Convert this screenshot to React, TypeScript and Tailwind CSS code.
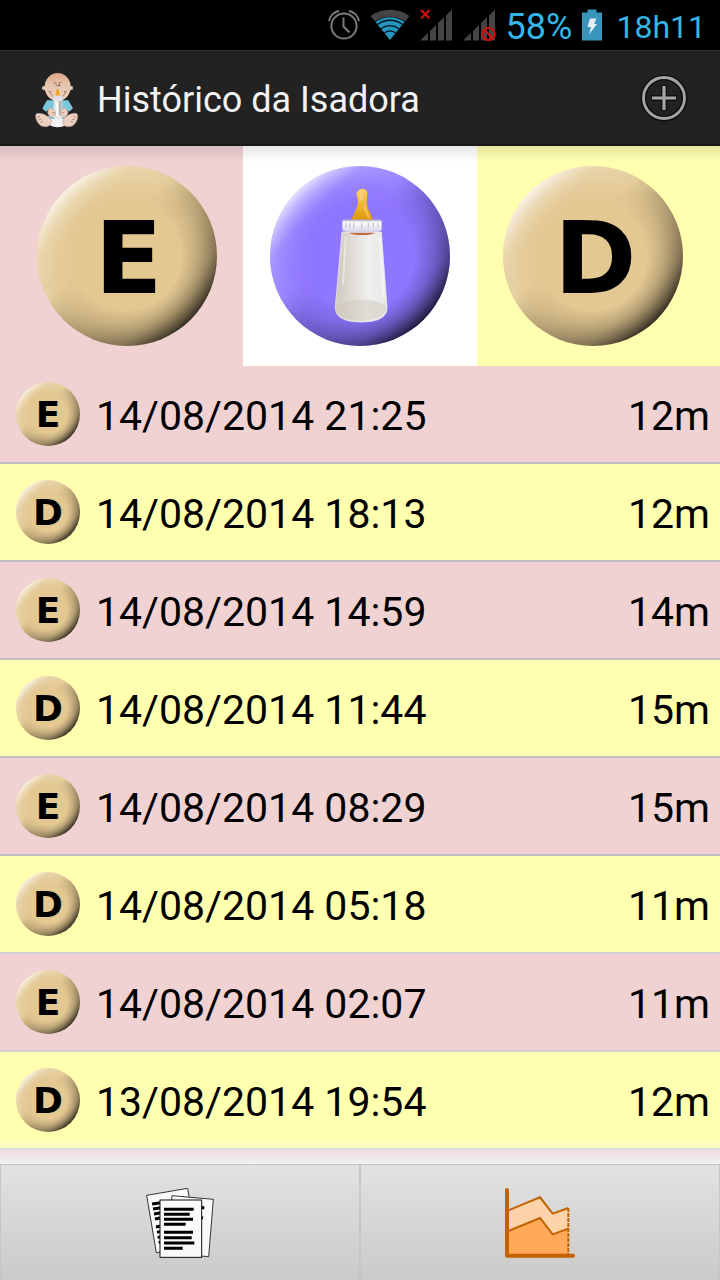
import { clsx } from "clsx";

type Side = "E" | "D";

type Feeding = {
  side: Side;
  date: string;
  duration: string;
};

const feedings: Feeding[] = [
  { side: "E", date: "14/08/2014 21:25", duration: "12m" },
  { side: "D", date: "14/08/2014 18:13", duration: "12m" },
  { side: "E", date: "14/08/2014 14:59", duration: "14m" },
  { side: "D", date: "14/08/2014 11:44", duration: "15m" },
  { side: "E", date: "14/08/2014 08:29", duration: "15m" },
  { side: "D", date: "14/08/2014 05:18", duration: "11m" },
  { side: "E", date: "14/08/2014 02:07", duration: "11m" },
  { side: "D", date: "13/08/2014 19:54", duration: "12m" },
];

function AlarmIcon() {
  return (
    <svg width="32" height="32" viewBox="0 0 32 32" fill="none" stroke="#7b7b7b" strokeWidth="2">
      <circle cx="16" cy="17" r="12.6" />
      <path d="M15.5 8.5v9l6 6" />
      <path d="M1 12C2 7 6 3 11 2M31 12C30 7 26 3 21 2" />
    </svg>
  );
}

function WifiIcon() {
  return (
    <svg width="40" height="32" viewBox="0 0 40 32" fill="none">
      <path d="M0.500 7C12 -1.300 28 -1.300 39.500 7L35 12.500C26 6 14 6 5 12.500Z" fill="#444" />
      <path d="M5.500 13C14 6.500 26 6.500 34.500 13L20 31Z" fill="#2795bf" />
      <path d="M7.500 15.500C15 9.800 25 9.800 32.500 15.500M11 19.700C16.500 15.500 23.500 15.500 29 19.700M14.500 24C18 21.200 22 21.200 25.500 24" stroke="#031319" strokeWidth="1.300" />
    </svg>
  );
}

function SignalIcon({ blocked }: { blocked?: boolean }) {
  return (
    <svg width="33" height="32" viewBox="0 0 33 32" fill="none">
      <path d="M0 31.500 8 24V31.500ZM10 22 16 16V31.500H10ZM18 14 24 8.200V31.500H18ZM26 6.500 32 0.500V31.500H26Z" fill="#444" />
      {blocked ? (
        <g stroke="#cc1010" strokeWidth="2.200">
          <circle cx="25.500" cy="25" r="6" />
          <path d="M21.500 21 29.500 29" />
        </g>
      ) : (
        <path d="M1 1 9.500 9.500M9.500 1 1 9.500" stroke="#d40c0c" strokeWidth="2.200" />
      )}
    </svg>
  );
}

function BatteryIcon() {
  return (
    <svg width="20" height="32" viewBox="0 0 20 32">
      <path d="M5.500 0.500h9v3H20V31.500H0V3.500h5.500Z" fill="#3894ba" />
      <path d="M8 9.500h6.500L12 15h3L7 25.500 9 18H5.500Z" fill="#e4eef3" />
    </svg>
  );
}

function BabyIcon() {
  return (
    <svg width="60" height="70" viewBox="0 0 180 210" aria-hidden="true">
      <defs>
        <linearGradient id="head" x1="0" y1="0" x2="0" y2="1">
          <stop offset="0" stopColor="#dea587" />
          <stop offset="0.400" stopColor="#e6c3ab" />
          <stop offset="1" stopColor="#ecd2c1" />
        </linearGradient>
      </defs>
      <path d="M68 160h60l-5 26q-25 14-50 0Z" fill="#f4f4f4" />
      <path d="M52 136 66 112h64l14 24-12 10-8-6v28H72v-28l-10 6Z" fill="#79c7dc" />
      <g fill="#ecd0c0" stroke="#a88878" strokeWidth="1.500">
        <path d="M34 152c14-4 36 4 46 22l-5 12c-5 6-17 7-26 3C35 180 28 160 34 152Z" />
        <path d="M156 152c-14-4-33 4-43 22l3 12c5 6 17 7 26 3 14-9 20-29 14-37Z" />
        <circle cx="57" cy="75" r="6" />
        <circle cx="138" cy="75" r="6" />
      </g>
      <ellipse cx="98" cy="72" rx="39" ry="42" fill="url(#head)" />
      <path d="M103 30q2-8-4-10M100 31l-5-5" stroke="#493327" strokeWidth="2" fill="none" />
      <path d="M86 61l5-2 4 4M101 60l8-1M98 69l-6-3" stroke="#5b4338" strokeWidth="2" fill="none" />
      <circle cx="102" cy="67" r="2.500" fill="#222" />
      <path d="M75 86q3 15 17 17M121 86q-3 15-16 17M71 86h8M117 86h8" stroke="#775c4d" strokeWidth="2" fill="none" />
      <path d="M92 98 94 85q-1-7 4-7t4 7l3 13Z" fill="#eaa722" />
      <rect x="85" y="98" width="28" height="12" rx="4" fill="#dedeea" />
      <path d="M87 109h24l3 55q-15 10-30 0Z" fill="#e6e5e2" />
      <path d="M97 117v44" stroke="#fff" strokeWidth="5" />
      <path d="M101 117h9M101 123h9M101 129h9M101 135h9M101 141h9M101 147h9M101 153h9" stroke="#55565a" strokeWidth="2" />
      <g fill="#ecd0c0" stroke="#b08f7d" strokeWidth="1.500">
        <path d="M72 136c8 0 20 6 20 13s-5 13-11 13-14-8-13-15Z" />
        <path d="M122 136c-8 0-16 6-16 13s5 13 11 13 13-8 12-15Z" />
      </g>
      <path d="M36 163l9-3M40 171l9-3M46 179l7-4M154 163l-9-3M150 171l-9-3M144 179l-7-4M80 149l10 1M110 149l8 0" stroke="#8f6d5d" strokeWidth="2" />
    </svg>
  );
}

function BottleIcon() {
  return (
    <svg width="54" height="136" viewBox="0 0 162 408" aria-hidden="true">
      <defs>
        <linearGradient id="nipple" x1="0" y1="0" x2="0" y2="1">
          <stop offset="0" stopColor="#ffcf66" />
          <stop offset="0.500" stopColor="#f0b63c" />
          <stop offset="1" stopColor="#dd9700" />
        </linearGradient>
        <linearGradient id="glass">
          <stop offset="0" stopColor="#cfc8bd" />
          <stop offset="0.250" stopColor="#dcd8d0" />
          <stop offset="0.650" stopColor="#efefed" />
          <stop offset="1" stopColor="#e6e6e6" />
        </linearGradient>
        <linearGradient id="ring" x1="0" y1="0" x2="0" y2="1">
          <stop offset="0" stopColor="#dcdbe4" />
          <stop offset="0.300" stopColor="#fafaff" />
          <stop offset="1" stopColor="#d0cde0" />
        </linearGradient>
      </defs>
      <path d="M52 95 68 59Q75 45 70 32L67 17Q71 3 86 2 100 3 100 17L98 44Q100 62 110 79L117 95Z" fill="url(#nipple)" />
      <path d="M75 15Q80 7 88 8L87 31 79 42ZM90 47 88 59 102 91 109 91Z" fill="#ffe08a" opacity=".5" />
      <path d="M24 132H142L159 356Q162 402 82 402T4 356Z" fill="url(#glass)" stroke="#f6f4f2" strokeWidth="2" />
      <path d="M9 362C12 326 153 326 156 362 150 410 15 410 9 362Z" fill="#cfc8bc" opacity=".5" />
      <path d="M35 145 27 290" stroke="#fff" strokeWidth="5" opacity=".45" />
      <path d="M138 147 149 330" stroke="#fff" strokeWidth="8" opacity=".45" />
      <path d="M45 134H123Q116 141 85 141T45 134Z" fill="#c96a3c" />
      <path d="M28 95H138Q143 95 143 102V125Q140 134 85 134T25 125V102Q25 95 28 95Z" fill="url(#ring)" />
      <path d="M27 97H140" stroke="#b5b2be" strokeWidth="3" />
      <path d="M36 106v12M47 105v14M59 104v15M83 104v17M103 104v15M118 105v13M132 106v12" stroke="#c5c4d0" strokeWidth="4" />
    </svg>
  );
}

function PapersIcon() {
  return (
    <svg width="68" height="70" viewBox="0 0 204 210" aria-hidden="true">
      <g fill="#fafafa" stroke="#111" strokeWidth="2.500">
        <path d="M2 22 125 1 153 172 31 194Z" />
        <path d="M78 23 202 34 188 206 64 195Z" />
      </g>
      <path d="M18 48 45 44M21 63 45 59M24 78 45 74M27 93 45 89M30 117 45 114M33 133 45 130M35 149 45 146M38 164 45 162" stroke="#000" strokeWidth="9" />
      <path d="M164 58 175 60M164 89 171 90" stroke="#000" strokeWidth="9" />
      <rect x="42" y="36" width="125" height="172" fill="#fafafa" stroke="#111" strokeWidth="3" />
      <path d="M54 64H143M54 79H131M54 94H141M54 109H119M54 133H141M54 149H137M54 165H145M54 181H110" stroke="#000" strokeWidth="9" />
    </svg>
  );
}

function ChartIcon() {
  return (
    <svg width="70" height="70" viewBox="0 0 210 210" fill="none" aria-hidden="true">
      <path d="M8 66 105 27 143 76 190 60V204H8Z" fill="#ffd3aa" />
      <path d="M8 130 105 90 143 138 190 122V204H8Z" fill="#ffa959" />
      <path d="M8 68 105 28 143 77 190 60M8 130 105 90 143 139 190 122" stroke="#c36200" strokeWidth="6" />
      <path d="M190 60V204" stroke="#c36200" strokeWidth="6" strokeDasharray="12 3" />
      <path d="M6 6V203H204" stroke="#c36200" strokeWidth="12" strokeLinecap="round" strokeLinejoin="round" />
    </svg>
  );
}

// Domed disc: a diagonal light is laid over the flat colour and masked to the rim
function Disc({ side, small }: { side?: Side; small?: boolean }) {
  return (
    <span
      className={clsx(
        "relative flex shrink-0 items-center justify-center overflow-hidden rounded-full",
        small ? "size-16" : "size-[180px]",
        side ? "bg-[#e3c892]" : "bg-[#8f76ff]"
      )}
    >
      <span className="absolute inset-0 bg-[linear-gradient(135deg,rgba(255,255,255,0.8)_14%,rgba(255,255,255,0.25)_26%,rgba(255,255,255,0.12)_40%,rgba(0,0,0,0.15)_50%,rgba(0,0,0,0.45)_74%,rgba(0,0,0,0.8)_86%)] [mask-image:radial-gradient(closest-side,transparent_60%,rgba(0,0,0,0.45)_80%,black_100%)]" />
      {side ? (
        <span
          className={clsx(
            "relative font-['DejaVu_Sans'] leading-none font-bold text-black",
            small ? "pt-0.5 text-[36px]" : "pt-1 pl-1 text-[99px]"
          )}
        >
          {side}
        </span>
      ) : (
        <span className="relative pl-0.5">
          <BottleIcon />
        </span>
      )}
    </span>
  );
}

export default function App() {
  return (
    <div className="flex h-screen flex-col overflow-hidden bg-[#f0d2d3] font-[Roboto,sans-serif]">
      <div className="flex h-[50px] shrink-0 items-center justify-end bg-black pr-3.5 text-[#33b5e5]">
        <div className="mr-2.5 flex items-center gap-2.5">
          <AlarmIcon />
          <WifiIcon />
          <SignalIcon />
          <SignalIcon blocked />
        </div>
        <span className="mr-2.5 pt-1 text-[36px] leading-none">58%</span>
        <BatteryIcon />
        <span className="ml-3.5 pt-1 text-[32px] leading-none">18h11</span>
      </div>

      <header className="flex h-24 shrink-0 items-center border-t border-b-2 border-t-[#303030] border-b-[#181818] bg-[#222] pr-8 pl-[25px]">
        <BabyIcon />
        <h1 className="ml-3 flex-1 pt-1 text-[36px] text-[#f3f3f3]">Histórico da Isadora</h1>
        <button aria-label="Adicionar" className="flex">
          <svg width="48" height="48" viewBox="0 0 48 48" fill="none">
            <circle cx="24" cy="24" r="20.500" stroke="#111" strokeWidth="6" />
            <path d="M24 11v26M11 24h26" stroke="#111" strokeWidth="6" />
            <circle cx="24" cy="24" r="20.500" stroke="#a6a6a6" strokeWidth="2.800" />
            <path d="M24 12v24M12 24h24" stroke="#a6a6a6" strokeWidth="3.200" />
          </svg>
        </button>
      </header>

      <main className="relative flex min-h-0 flex-1 flex-col">
        <div className="pointer-events-none absolute inset-x-0 top-0 z-10 h-4 bg-gradient-to-b from-black/10 to-transparent" />
        <div className="flex h-[220px] shrink-0">
          <button aria-label="Esquerdo" className="flex flex-1 items-center justify-center bg-[#f0d2d3] pl-2.5">
            <Disc side="E" />
          </button>
          <button aria-label="Mamadeira" className="flex flex-1 items-center justify-center bg-white">
            <Disc />
          </button>
          <button aria-label="Direito" className="flex flex-1 items-center justify-center bg-[#ffffb0] pr-2.5">
            <Disc side="D" />
          </button>
        </div>

        <ul className="min-h-0 flex-1 overflow-hidden">
          {feedings.map((f, i) => (
            <li
              key={f.date}
              className={clsx(
                "flex h-[98px] items-center gap-4 border-b-2 pr-2.5 pl-4 text-[41px] text-black",
                f.side === "E" ? "bg-[#f0d2d3]" : "bg-[#ffffb0]",
                i < 5 ? "border-[#bfbfc1]" : "border-[#d0d0d4]"
              )}
            >
              <Disc side={f.side} small />
              <span className="flex-1 pt-1.5">{f.date}</span>
              <span className="pt-1.5">{f.duration}</span>
            </li>
          ))}
        </ul>
        <div className="pointer-events-none absolute inset-x-0 bottom-0 h-6 bg-gradient-to-t from-[#f1f0f2] to-transparent" />
      </main>

      <nav className="flex h-[116px] shrink-0 border border-b-0 border-[#c6c6c6] bg-gradient-to-b from-[#e2e2e2] to-[#cacaca]">
        <button aria-label="Relatório" className="flex flex-1 items-center justify-center border-r-2 border-[#c6c6c6]">
          <PapersIcon />
        </button>
        <button aria-label="Gráfico" className="flex flex-1 items-center justify-center">
          <ChartIcon />
        </button>
      </nav>
    </div>
  );
}
